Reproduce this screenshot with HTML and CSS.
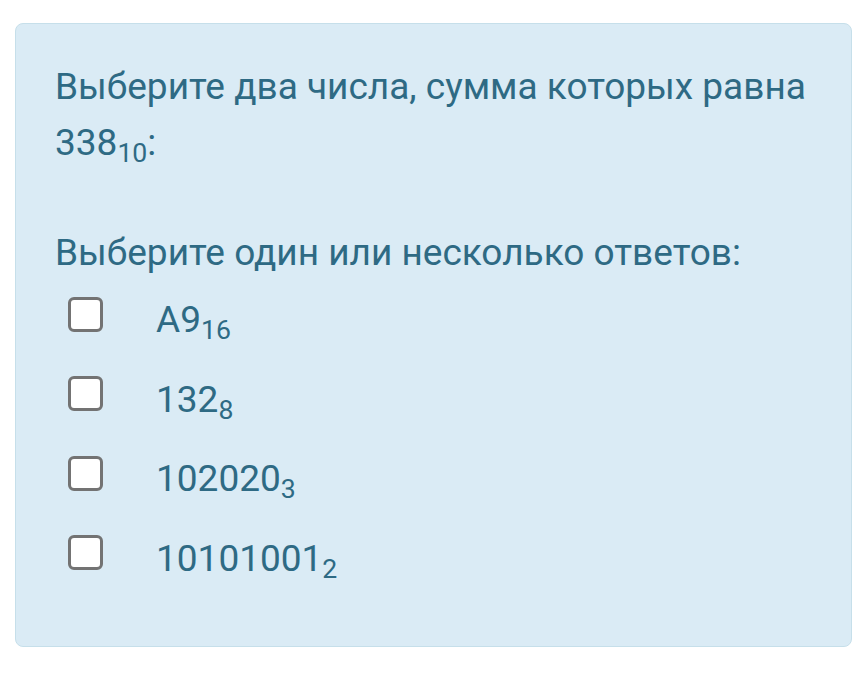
FILE: index.html
```html
<!DOCTYPE html>
<html lang="ru">
<head>
<meta charset="utf-8">
<link rel="stylesheet" href="styles.css">
</head>
<body>
<div class="card">
  <div class="question">Выберите два числа, сумма которых равна 338<sub>10</sub>:</div>
  <div class="prompt">Выберите один или несколько ответов:</div>
  <div class="answers">
    <label class="answer"><span class="box"></span><span class="label">A9<sub>16</sub></span></label>
    <label class="answer"><span class="box"></span><span class="label">132<sub>8</sub></span></label>
    <label class="answer"><span class="box"></span><span class="label">102020<sub>3</sub></span></label>
    <label class="answer"><span class="box"></span><span class="label">10101001<sub>2</sub></span></label>
  </div>
</div>
</body>
</html>
```

FILE: styles.css
```css
html, body {
  margin: 0;
  padding: 0;
  background: #ffffff;
}
body {
  padding: 23px 12px 0 15px;
  font-family: Roboto, "Noto Sans", sans-serif;
  color: #2e6a84;
}
.card {
  background: #daebf5;
  border: 1px solid #c6dfea;
  border-radius: 8px;
  height: 624px;
  box-sizing: border-box;
  padding: 35px 30px 0 39px;
}
.question {
  font-size: 37px;
  line-height: 56px;
}
sub {
  font-size: 0.72em;
  line-height: 0;
  vertical-align: -0.27em;
}
.prompt {
  font-size: 37px;
  line-height: 56px;
  margin-top: 54px;
}
.answers {
  display: flex;
  flex-direction: column;
  margin-top: -1px;
}
.answer {
  display: flex;
  align-items: center;
  height: 79.5px;
}
.box {
  width: 35px;
  height: 35px;
  box-sizing: border-box;
  border: 3px solid #737373;
  border-radius: 6px;
  background: #fff;
  margin-left: 13px;
  margin-right: 53px;
  margin-bottom: 11px;
}
.label {
  font-size: 37px;
}
```
